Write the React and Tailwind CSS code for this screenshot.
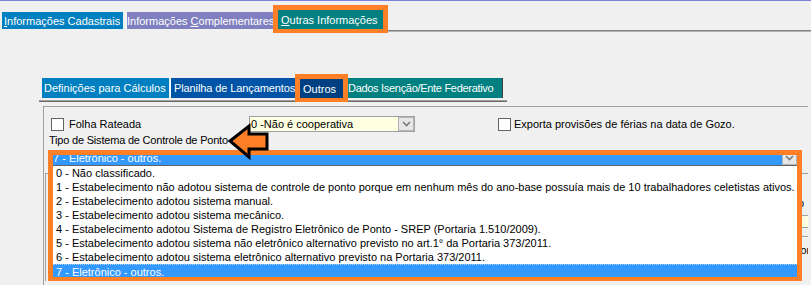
import React from "react";

const Chevron = () => (
  <svg width="9" height="6" viewBox="0 0 9 6">
    <polyline points="1,1 4.5,4.5 8,1" fill="none" stroke="#7a7a7a" strokeWidth="1.6" />
  </svg>
);

const items = [
  "0 - Não classificado.",
  "1 - Estabelecimento não adotou sistema de controle de ponto porque em nenhum mês do ano-base possuía mais de 10 trabalhadores celetistas ativos.",
  "2 - Estabelecimento adotou sistema manual.",
  "3 - Estabelecimento adotou sistema mecânico.",
  "4 - Estabelecimento adotou Sistema de Registro Eletrônico de Ponto - SREP (Portaria 1.510/2009).",
  "5 - Estabelecimento adotou sistema não eletrônico alternativo previsto no art.1° da Portaria 373/2011.",
  "6 - Estabelecimento adotou sistema eletrônico alternativo previsto na Portaria 373/2011.",
  "7 - Eletrônico - outros.",
];

export default function App() {
  return (
    <div className="relative w-[811px] h-[285px] overflow-hidden bg-[#f0f0f0] font-['Liberation_Sans',Arial,sans-serif] text-[11px] leading-[14px] text-black">
      <div className="h-px bg-[#8080e0]" />

      {/* top tabs */}
      <div className="mt-[4px] flex h-[28px]">
        <div className="ml-[2px] mt-[7px] h-[17px] w-[121px] bg-[#0080c0] text-white pl-[2px] flex items-center whitespace-nowrap">
          <span><u>I</u>nformações Cadastrais</span>
        </div>
        <div className="ml-[3px] mt-[7px] h-[17px] w-[147px] border-l border-white bg-[#8080c0] text-white flex items-center whitespace-nowrap">
          <span>Informações <u>C</u>omplementares</span>
        </div>
        <div className="relative z-10 h-[28px] w-[115px] border-x-[5px] border-t-[5px] border-b-[4px] border-[#ff7f27]">
          <div className="h-full bg-[#008080] text-white pl-[3px] flex items-center whitespace-nowrap">
            <span><u>O</u>utras Informações</span>
          </div>
        </div>
        <div className="flex-1 mt-[25px] h-[2px] border-t border-[#808080] border-b border-b-[#b4b4b4]" />
      </div>

      {/* second tabs */}
      <div className="mt-[41px] flex items-start h-[26px]">
        <div className="ml-[42px] mt-[4px] h-[20px] w-[127px] bg-[#0080c0] text-white pl-[2px] flex items-center whitespace-nowrap">
          Definições para Cálculos
        </div>
        <div className="ml-[1px] mt-[4px] h-[20px] w-[125px] border-l border-white bg-[#0054a8] text-white pl-[3px] flex items-center whitespace-nowrap tracking-[-0.1px]">
          Planilha de Lançamentos
        </div>
        <div className="relative z-10 h-[28px] w-[53px] border-x-[5px] border-t-[5px] border-b-[4px] border-[#ff7f27]">
          <div className="h-full bg-[#004080] text-white pl-[3px] flex items-center whitespace-nowrap">
            Outros
          </div>
        </div>
        <div className="mt-[4px] h-[20px] w-[155px] border-r border-[#404040] bg-[#008080] text-white flex items-center whitespace-nowrap overflow-hidden tracking-[-0.3px]">
          Dados Isenção/Ente Federativo
        </div>
      </div>
      <div className="ml-[39px] w-[468px] h-[2px] border-t border-[#a0a0a0] border-b border-b-[#696969]" />

      {/* panel */}
      <div className="mt-[4px] ml-[43px] w-[765px] h-[179px] border-l border-t border-[#a0a0a0]">
        <div className="pt-[9px] flex items-center h-[25px]">
          <div className="w-[205px] flex items-center">
            <div className="ml-[7px] w-[13px] h-[13px] bg-white border border-[#646464]" />
            <span className="ml-[5px]">Folha Rateada</span>
          </div>
          <div className="w-[166px] h-[16px] border border-[#a0a0a0] bg-[#ffffe1] flex items-center">
            <span className="flex-1 pl-[1px] whitespace-nowrap">0 -Não é cooperativa</span>
            <div className="w-[16px] h-[14px] bg-[#e6e6e6] border border-[#b4b4b4] flex items-center justify-center">
              <Chevron />
            </div>
          </div>
          <div className="ml-[83px] w-[13px] h-[13px] bg-white border border-[#646464]" />
          <span className="ml-[3px] whitespace-nowrap">Exporta provisões de férias na data de Gozo.</span>
        </div>

        <div className="mt-[1px] pl-[5px] h-[14px] whitespace-nowrap tracking-[-0.2px]">Tipo de Sistema de Controle de Ponto</div>

        <div className="relative mt-[4px] ml-[9px] w-[744px] h-[14px] flex z-20">
          <div className="flex-1 bg-[#3399ff] text-white whitespace-nowrap">7 - Eletrônico - outros.</div>
          <div className="w-[15px] h-[14px] bg-[#e6e6e6] border border-[#b4b4b4] flex items-center justify-center">
            <Chevron />
          </div>
          {/* open list */}
          <div className="absolute left-0 top-[14px] w-[744px] h-[113px] bg-white border-t border-[#646464] overflow-hidden">
            {items.map((t, i) => (
              <div
                key={i}
                className={
                  i === 7
                    ? "h-[14px] pl-[3px] whitespace-nowrap bg-[#3399ff] text-white border-t border-dotted border-[#a8d0ff]"
                    : "h-[14px] pl-[3px] whitespace-nowrap"
                }
              >
                {t}
              </div>
            ))}
          </div>
        </div>

        {/* group box partly hidden behind list */}
        <div className="mt-[8px] ml-[1px] h-[108px] border-t border-l border-[#a0a0a0] flex">
          <div className="flex-1 flex items-end">
            <div className="ml-[37px] w-[33px] h-[4px] border-t border-x border-[#a0a0a0]" />
            <div className="ml-[606px] w-[6px] h-[4px] border-x border-[#a0a0a0]" />
          </div>
          <div className="w-[12px] pt-[8px] flex flex-col overflow-hidden">
            <div className="pl-[2px] h-[14px]">r</div>
            <div className="pl-[2px] h-[14px]">o</div>
            <div className="mt-[5px] h-[13px] bg-[#ffffe1] border-y border-[#a0a0a0]" />
            <div className="mt-[8px] h-[2px] border-t border-[#a0a0a0] border-b border-b-white" />
            <div className="mt-[5px] pl-[2px] h-[14px] whitespace-nowrap">lor</div>
          </div>
        </div>
      </div>

      {/* annotations */}
      <div className="absolute left-[48px] top-[150px] w-[754px] h-[131px] border-[5px] border-b-[4px] border-[#ff7f27] z-30 pointer-events-none" />
      <svg className="absolute left-[226px] top-[122px] z-40" width="46" height="40" viewBox="0 0 46 40">
        <polygon
          points="4,19 23,4 23,12 41,12 41,27 23,27 23,35"
          fill="#ff7f27"
          stroke="#000"
          strokeWidth="3"
          strokeLinejoin="miter"
        />
      </svg>
    </div>
  );
}
